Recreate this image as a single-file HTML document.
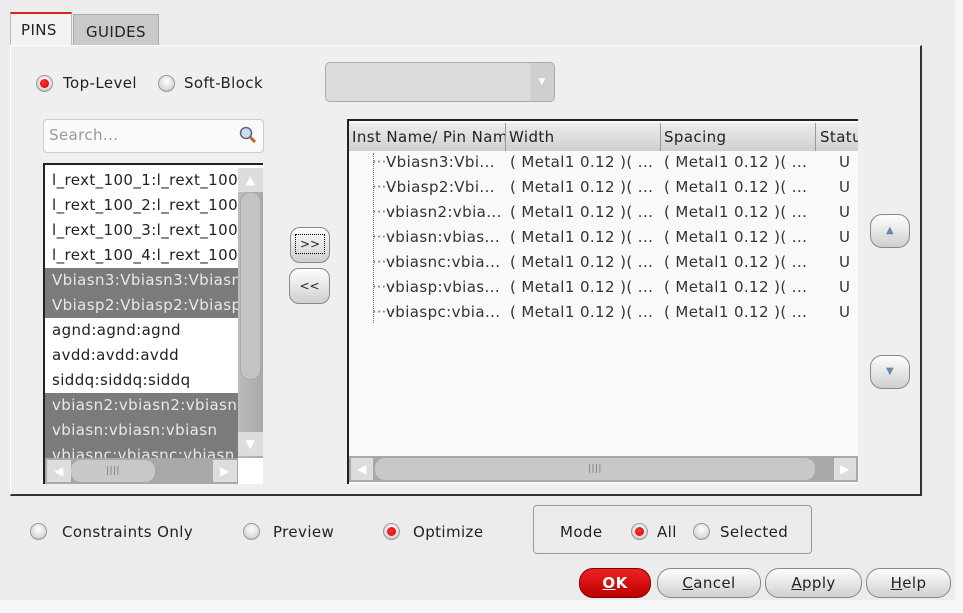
<!DOCTYPE html>
<html><head><style>
*{margin:0;padding:0;box-sizing:border-box}
body{width:963px;height:613px;background:#ececec;font-family:"DejaVu Sans","Liberation Sans",sans-serif;font-size:15px;letter-spacing:0.4px;color:#222;position:relative;overflow:hidden}
.a{position:absolute}
.radio{position:absolute;width:17px;height:17px;border-radius:50%;background:radial-gradient(circle at 50% 35%,#fff,#ddd 60%,#aaa);border:1px solid #999}
.radio.on::after{content:"";position:absolute;left:3px;top:3px;width:9px;height:9px;border-radius:50%;background:radial-gradient(circle at 40% 40%,#f33,#c00)}
.btn{position:absolute;border:1px solid #888;border-radius:14px;background:linear-gradient(#fdfdfd,#e2e2e2 60%,#cfcfcf);text-align:center}
.row{position:absolute;left:0;height:25px;line-height:25px;padding-left:7px;white-space:nowrap;overflow:hidden;width:193px}
.sel{background:#7b7b7b;color:#e8e8e8}
.trow{position:absolute;height:25px;line-height:25px;white-space:nowrap;color:#333}
.sb{background:linear-gradient(90deg,#bcbcbc,#a8a8a8)}
</style></head><body>
<div class="a" style="left:10px;top:12px;width:62px;height:34px;background:#f2f2f2;border:1px solid #bbb;border-bottom:none;border-top:2px solid #d22"></div>
<div class="a" style="left:21px;top:21px">PINS</div>
<div class="a" style="left:73px;top:14px;width:86px;height:32px;background:#c9c9c9;border:1px solid #aaa;border-bottom:none"></div>
<div class="a" style="left:86px;top:23px">GUIDES</div>
<div class="a" style="left:10px;top:45px;width:912px;height:451px;border-left:1px solid #fff;border-top:1px solid #fff;border-right:2px solid #333;border-bottom:2px solid #333;background:#efefef"></div>
<div class="radio on" style="left:36px;top:75px"></div><div class="a" style="left:63px;top:74px">Top-Level</div>
<div class="radio" style="left:158px;top:75px"></div><div class="a" style="left:184px;top:74px">Soft-Block</div>
<div class="a" style="left:325px;top:62px;width:230px;height:40px;border:1px solid #aaa;border-radius:5px;background:#dcdcdc"></div>
<div class="a" style="left:530px;top:63px;width:24px;height:38px;background:#cfcfcf;border-radius:0 5px 5px 0;color:#fff;font-size:9px;text-align:center;line-height:38px">▼</div>
<div class="a" style="left:43px;top:119px;width:221px;height:34px;background:#fafafa;border:1px solid #ccc;border-radius:4px"></div>
<div class="a" style="left:49px;top:126px;color:#999">Search...</div>
<svg class="a" style="left:238px;top:125px" width="20" height="20"><circle cx="8" cy="8" r="5.5" fill="#cde" stroke="#568" stroke-width="1.5"/><line x1="12" y1="12" x2="17" y2="17" stroke="#b63" stroke-width="3"/></svg>
<div class="a" style="left:43px;top:163px;width:220px;height:321px;background:#fff;border-left:2px solid #222;border-top:2px solid #222;overflow:hidden">
<div class="row" style="top:3px">l_rext_100_1:l_rext_100</div>
<div class="row" style="top:28px">l_rext_100_2:l_rext_100</div>
<div class="row" style="top:53px">l_rext_100_3:l_rext_100</div>
<div class="row" style="top:78px">l_rext_100_4:l_rext_100</div>
<div class="row sel" style="top:103px">Vbiasn3:Vbiasn3:Vbiasn</div>
<div class="row sel" style="top:128px">Vbiasp2:Vbiasp2:Vbiasp</div>
<div class="row" style="top:153px">agnd:agnd:agnd</div>
<div class="row" style="top:178px">avdd:avdd:avdd</div>
<div class="row" style="top:203px">siddq:siddq:siddq</div>
<div class="row sel" style="top:228px">vbiasn2:vbiasn2:vbiasn</div>
<div class="row sel" style="top:253px">vbiasn:vbiasn:vbiasn</div>
<div class="row sel" style="top:278px">vbiasnc:vbiasnc:vbiasn</div>
<div class="a sb" style="left:193px;top:3px;width:25px;height:290px"></div>
<div class="a" style="left:193px;top:3px;width:25px;height:24px;background:#ddd;color:#fff;text-align:center;font-size:12px;line-height:24px">▲</div>
<div class="a" style="left:195px;top:27px;width:21px;height:188px;background:#c4c4c4;border-radius:10px;border:1px solid #aaa"></div>
<div class="a" style="left:193px;top:267px;width:25px;height:24px;background:#ddd;color:#fff;text-align:center;font-size:12px;line-height:24px">▼</div>
<div class="a" style="left:0;top:293px;width:193px;height:26px;background:#a8a8a8"></div>
<div class="a" style="left:2px;top:295px;width:24px;height:22px;background:#ddd;color:#fff;font-size:12px;line-height:22px;text-align:center">◀</div>
<div class="a" style="left:26px;top:295px;width:84px;height:22px;background:#c8c8c8;border-radius:10px;text-align:center;font-size:9px;line-height:22px;color:#777">||||</div>
<div class="a" style="left:168px;top:295px;width:24px;height:22px;background:#ddd;color:#fff;font-size:12px;line-height:22px;text-align:center">▶</div>
</div>
<div class="btn" style="left:290px;top:227px;width:40px;height:36px;border-radius:10px;line-height:32px;font-size:12px;letter-spacing:0"><span style="border:1px dotted #000;padding:2px 4px">&gt;&gt;</span></div>
<div class="btn" style="left:289px;top:268px;width:41px;height:36px;border-radius:10px;line-height:34px;font-size:12px;letter-spacing:0">&lt;&lt;</div>
<div class="a" style="left:347px;top:119px;width:511px;height:365px;background:#f9f9f9;border-left:2px solid #222;border-top:2px solid #222;overflow:hidden">
<div class="a" style="left:0;top:2px;width:511px;height:28px;background:linear-gradient(#ececec,#d0d0d0)"></div>
<div class="a" style="left:3px;top:7px;white-space:nowrap;width:153px;overflow:hidden">Inst Name/ Pin Name</div>
<div class="a" style="left:156px;top:2px;width:1px;height:28px;background:#999"></div>
<div class="a" style="left:160px;top:7px">Width</div>
<div class="a" style="left:311px;top:2px;width:1px;height:28px;background:#999"></div>
<div class="a" style="left:315px;top:7px">Spacing</div>
<div class="a" style="left:466px;top:2px;width:1px;height:28px;background:#999"></div>
<div class="a" style="left:471px;top:7px">Status</div>
<div class="a" style="left:24px;top:32px;height:170px;border-left:1px dotted #777"></div>
</div>
<div class="a" style="left:349px;top:150px;width:509px">
<div class="trow" style="top:0"><span class="a" style="left:23px;top:0;color:#777;letter-spacing:0">·····</span><span class="a" style="left:37px">Vbiasn3:Vbi...</span><span class="a" style="left:161px">( Metal1 0.12 )( ...</span><span class="a" style="left:315px">( Metal1 0.12 )( ...</span><span class="a" style="left:490px">U</span></div>
<div class="trow" style="top:25px"><span class="a" style="left:23px;color:#777;letter-spacing:0">·····</span><span class="a" style="left:37px">Vbiasp2:Vbi...</span><span class="a" style="left:161px">( Metal1 0.12 )( ...</span><span class="a" style="left:315px">( Metal1 0.12 )( ...</span><span class="a" style="left:490px">U</span></div>
<div class="trow" style="top:50px"><span class="a" style="left:23px;color:#777;letter-spacing:0">·····</span><span class="a" style="left:37px">vbiasn2:vbia...</span><span class="a" style="left:161px">( Metal1 0.12 )( ...</span><span class="a" style="left:315px">( Metal1 0.12 )( ...</span><span class="a" style="left:490px">U</span></div>
<div class="trow" style="top:75px"><span class="a" style="left:23px;color:#777;letter-spacing:0">·····</span><span class="a" style="left:37px">vbiasn:vbias...</span><span class="a" style="left:161px">( Metal1 0.12 )( ...</span><span class="a" style="left:315px">( Metal1 0.12 )( ...</span><span class="a" style="left:490px">U</span></div>
<div class="trow" style="top:100px"><span class="a" style="left:23px;color:#777;letter-spacing:0">·····</span><span class="a" style="left:37px">vbiasnc:vbia...</span><span class="a" style="left:161px">( Metal1 0.12 )( ...</span><span class="a" style="left:315px">( Metal1 0.12 )( ...</span><span class="a" style="left:490px">U</span></div>
<div class="trow" style="top:125px"><span class="a" style="left:23px;color:#777;letter-spacing:0">·····</span><span class="a" style="left:37px">vbiasp:vbias...</span><span class="a" style="left:161px">( Metal1 0.12 )( ...</span><span class="a" style="left:315px">( Metal1 0.12 )( ...</span><span class="a" style="left:490px">U</span></div>
<div class="trow" style="top:150px"><span class="a" style="left:23px;color:#777;letter-spacing:0">·····</span><span class="a" style="left:37px">vbiaspc:vbia...</span><span class="a" style="left:161px">( Metal1 0.12 )( ...</span><span class="a" style="left:315px">( Metal1 0.12 )( ...</span><span class="a" style="left:490px">U</span></div>
</div>
<div class="a" style="left:349px;top:456px;width:509px;height:26px;background:#a8a8a8"></div>
<div class="a" style="left:351px;top:458px;width:22px;height:22px;background:#ddd;color:#fff;font-size:12px;line-height:22px;text-align:center">◀</div>
<div class="a" style="left:375px;top:458px;width:440px;height:22px;background:#c8c8c8;border-radius:10px;text-align:center;font-size:9px;line-height:22px;color:#777">||||</div>
<div class="a" style="left:834px;top:458px;width:22px;height:22px;background:#ddd;color:#fff;font-size:12px;line-height:22px;text-align:center">▶</div>
<div class="btn" style="left:870px;top:214px;width:40px;height:34px;border-radius:12px;color:#68a;font-size:10px;line-height:32px">▲</div>
<div class="btn" style="left:870px;top:355px;width:40px;height:34px;border-radius:12px;color:#68a;font-size:10px;line-height:32px">▼</div>
<div class="radio" style="left:30px;top:523px"></div><div class="a" style="left:62px;top:523px">Constraints Only</div>
<div class="radio" style="left:243px;top:523px"></div><div class="a" style="left:273px;top:523px">Preview</div>
<div class="radio on" style="left:383px;top:523px"></div><div class="a" style="left:413px;top:523px">Optimize</div>
<div class="a" style="left:533px;top:505px;width:279px;height:49px;border:1px solid #999;border-radius:4px"></div>
<div class="a" style="left:560px;top:523px">Mode</div>
<div class="radio on" style="left:631px;top:523px"></div><div class="a" style="left:657px;top:523px">All</div>
<div class="radio" style="left:693px;top:523px"></div><div class="a" style="left:720px;top:523px">Selected</div>
<div class="btn" style="left:579px;top:568px;width:72px;height:30px;background:linear-gradient(#e22,#b00);border-color:#800;color:#fff;font-weight:bold;line-height:28px"><u>O</u>K</div>
<div class="btn" style="left:657px;top:568px;width:104px;height:30px;line-height:28px"><u>C</u>ancel</div>
<div class="btn" style="left:765px;top:568px;width:97px;height:30px;line-height:28px"><u>A</u>pply</div>
<div class="btn" style="left:866px;top:568px;width:85px;height:30px;line-height:28px"><u>H</u>elp</div>
<div class="a" style="left:955px;top:0;width:8px;height:613px;background:#f7f7f7"></div>
<div class="a" style="left:0;top:600px;width:963px;height:13px;background:#f7f7f7"></div>
</body></html>
